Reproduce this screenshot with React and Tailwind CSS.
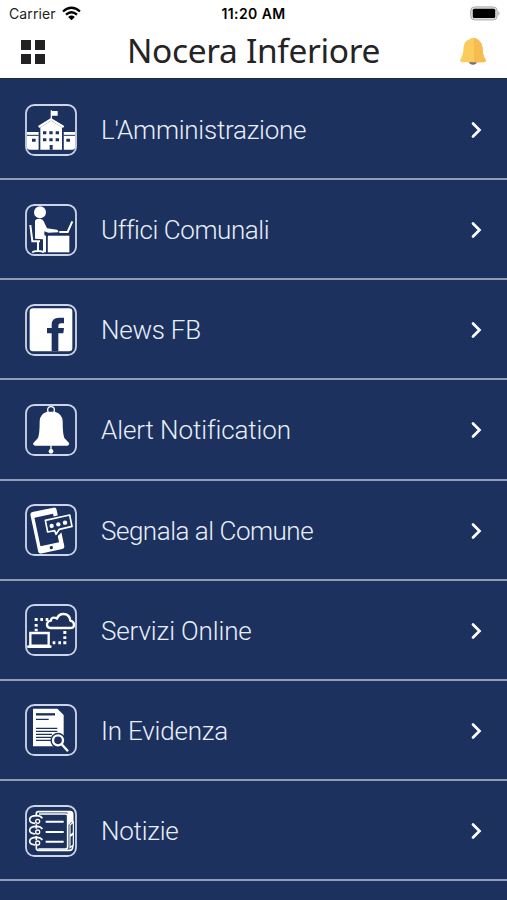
import React from 'react';

const NAVY = '#1c315e';

function TownHallIcon() {
  return (
    <>
      <path d="M36 110h35v53H44q-8 0-8-8zM146 110h34v45q0 8-8 8h-26z" fill="#fff" />
      <path d="M36 120h35M146 120h34" stroke={NAVY} strokeWidth="3" />
      <path d="M76 163V96l32-20 33 20v67z" fill="#fff" />
      <path d="M71 95l37-23 38 23" fill="none" stroke="#fff" strokeWidth="7" />
      <path d="M109 70V45M109 49h17v10h-17" fill="#fff" stroke="#fff" strokeWidth="4" />
      <path d="M84 108h10v9H84zM103 108h10v9h-10zM122 108h10v9h-10zM84 129h10v9H84zM103 129h10v9h-10zM122 129h10v9h-10zM51 130h11v9H51zM154 130h11v9h-11zM104 149h9v14h-9z" fill={NAVY} />
      <path d="M73 112v51M144 112v51" stroke={NAVY} strokeWidth="2" />
    </>
  );
}

function DeskIcon() {
  return (
    <>
      <circle cx="75" cy="51" r="18" fill="#fff" />
      <path d="M60 76q2-6 14-6 9 0 12 8l10 21 30 4q5 2 4 8l-30 1-12-4v11l9 5v47H84v-39l-24-2z" fill="#fff" />
      <path d="M46 89l6 49h23M69 139v31M53 172q0-5 16-5t16 5" fill="none" stroke="#fff" strokeWidth="6" />
      <path d="M99 121h64v50H99z" fill="#fff" />
      <path d="M97 118h67" stroke={NAVY} strokeWidth="2" />
      <path d="M133 110h25l14-32" fill="none" stroke="#fff" strokeWidth="6" />
      <path d="M95 121v52" stroke={NAVY} strokeWidth="4" />
    </>
  );
}

function FacebookIcon() {
  return (
    <>
      <rect x="44" y="39" width="128" height="129" rx="10" fill="#fff" />
      <path d="M110 168v-54H96v-16h14V88q0-21 22-21h15v17h-9q-8 0-8 8v6h17l-2 16h-15v54z" fill={NAVY} />
    </>
  );
}

function BellIcon() {
  return (
    <>
      <circle cx="108" cy="44" r="10" fill="none" stroke="#fff" strokeWidth="4" />
      <path d="M96 49h24q23 8 23 28 0 39 5 51l14 15q2 7-5 8H60q-7-1-5-8l14-15q5-12 5-51 0-20 22-28z" fill="#fff" />
      <path d="M108 150v15" stroke="#fff" strokeWidth="4" />
      <circle cx="108" cy="168" r="7" fill="#fff" />
    </>
  );
}

function PhoneMessageIcon() {
  return (
    <>
      <g transform="rotate(-12 98 105)">
        <rect x="57" y="42" width="80" height="127" rx="8" fill="#fff" />
        <path d="M67 60h57v87H67z" fill={NAVY} />
        <circle cx="98" cy="158" r="5" fill={NAVY} />
      </g>
      <path d="M84 71l84-20 11 48-38 11-18 17-3-14-25 3z" fill={NAVY} />
      <path d="M91 75l73-16 7 34-38 9-10 15-4-11-21 4z" fill={NAVY} stroke="#fff" strokeWidth="5" strokeLinejoin="round" />
      <circle cx="110" cy="92" r="6.5" fill="#fff" />
      <circle cx="130" cy="87" r="6.5" fill="#fff" />
      <circle cx="150" cy="82" r="6.5" fill="#fff" />
    </>
  );
}

function CloudIcon() {
  return (
    <>
      <path d="M106 98q-10-2-10-10 0-10 12-12 0-10 10-9 5 0 8 3 5-14 19-14 19 0 21 20 11 3 11 12 0 10-12 10z" fill="none" stroke="#fff" strokeWidth="7" strokeLinejoin="round" />
      <path d="M46 113h55v38H46z" fill="none" stroke="#fff" strokeWidth="7" />
      <path d="M40 154h66" stroke="#fff" strokeWidth="8" strokeLinecap="round" />
      <path d="M59 68h9v9h-9zM76 68h8v9h-8zM92 68h8v9h-8zM59 86h9v8h-9zM59 100h9v8h-9zM145 107h9v9h-9zM145 123h9v8h-9zM145 138h9v9h-9zM130 138h8v9h-8zM113 138h8v9h-8z" fill="#fff" />
    </>
  );
}

function DocumentIcon() {
  return (
    <>
      <path d="M54 40h73l19 19v94H54z" fill="#fff" />
      <path d="M63 57h57" stroke={NAVY} strokeWidth="7" />
      <path d="M63 72h38M63 99h64M63 108h64M63 117h48M63 126h46M63 135h46" stroke={NAVY} strokeWidth="4" />
      <circle cx="129" cy="135" r="23" fill={NAVY} />
      <path d="M138 146l22 24" stroke={NAVY} strokeWidth="15" />
      <circle cx="129" cy="135" r="15" fill={NAVY} stroke="#fff" strokeWidth="7" />
      <path d="M140 147l19 21" stroke="#fff" strokeWidth="7" />
    </>
  );
}

function NotebookIcon() {
  return (
    <>
      <path d="M64 60V51q0-5 6-5h95q8 0 8 8v98q0 10-10 10H71q-7 0-7-7v-10M64 84v13M64 119v13" fill="none" stroke="#fff" strokeWidth="5" />
      <path d="M72 53h80q6 0 6 6v93q0 6-6 6H70" fill="none" stroke="#fff" strokeWidth="5" />
      <path d="M157 47h15v28l-12 12z" fill="#fff" />
      <path d="M165 86l10-9v32l-10 9zM165 121l10-8v33l-10 8z" fill={NAVY} stroke="#fff" strokeWidth="3.5" />
      <path d="M92 76h54M92 107h54M92 136h54" stroke="#fff" strokeWidth="6" />
      {[0, 32, 65].map((y) => (
        <g key={y} transform={`translate(0 ${y})`}>
          <path d="M82 66q-5-8-17-8-21 0-21 12 0 10 17 11" fill="none" stroke="#fff" strokeWidth="5" />
          <circle cx="68" cy="75" r="6" fill={NAVY} stroke="#fff" strokeWidth="4" />
        </g>
      ))}
    </>
  );
}

const items = [
  { label: "L'Amministrazione", Icon: TownHallIcon, tracking: 'tracking-[-0.25px]' },
  { label: 'Uffici Comunali', Icon: DeskIcon, tracking: 'tracking-[-0.42px]' },
  { label: 'News FB', Icon: FacebookIcon, tracking: 'tracking-[-0.25px]' },
  { label: 'Alert Notification', Icon: BellIcon, tracking: 'tracking-[-0.1px]' },
  { label: 'Segnala al Comune', Icon: PhoneMessageIcon, tracking: 'tracking-[-0.48px]' },
  { label: 'Servizi Online', Icon: CloudIcon, tracking: 'tracking-[-0.12px]' },
  { label: 'In Evidenza', Icon: DocumentIcon, tracking: 'tracking-[-0.2px]' },
  { label: 'Notizie', Icon: NotebookIcon, tracking: 'tracking-[-0.25px]' },
];

function StatusBar() {
  return (
    <div className="grid h-7 grid-cols-3 items-center pl-[9px] pr-[6px] font-['Inter','Liberation_Sans',sans-serif] text-[14px] leading-none text-[#222]">
      <div className="flex items-center gap-[6px]">
        <span className="tracking-[0.1px]">Carrier</span>
        <svg width="19" height="15" viewBox="0 0 19 15" className="-mt-0.5" fill="none" stroke="#000" strokeWidth="2.3">
          <path d="M1 5.5Q9.5-2 18 5.5M4 8.7q5.5-4.8 11 0" />
          <path d="M6.2 10.9Q9.5 8 12.8 10.9L9.5 14.3z" fill="#000" stroke="none" />
        </svg>
      </div>
      <span className="pr-[3px] text-center text-[14px] font-semibold tracking-[0.4px] text-black">11:20 AM</span>
      <svg className="-mt-0.5 justify-self-end" width="31" height="15" viewBox="0 0 31 15">
        <rect x="0.7" y="0.9" width="26.5" height="13" rx="4" fill="#ddd" stroke="#aaa" />
        <rect x="2.8" y="2.8" width="22.4" height="9.3" rx="1.5" fill="#000" />
        <path d="M28.4 5q2.4 2.4 0 5z" fill="#aaa" />
      </svg>
    </div>
  );
}

function Header() {
  return (
    <header className="h-[79px] shrink-0 border-b border-[#222a3c] bg-white">
      <StatusBar />
      <div className="flex h-12 items-center justify-between px-[21px]">
        <div className="grid grid-cols-2 gap-1">
          <span className="size-[10px] bg-[#222124]" />
          <span className="size-[10px] bg-[#222124]" />
          <span className="size-[10px] bg-[#222124]" />
          <span className="size-[10px] bg-[#222124]" />
        </div>
        <h1 className="whitespace-nowrap pb-0.5 pl-0.5 font-['Noto_Sans',sans-serif] text-[33.5px] leading-none tracking-[-0.35px] text-[#242326]">Nocera Inferiore</h1>
        <svg width="26" height="30" viewBox="0 0 26 30">
          <path d="M8.5 24a4.7 5.3 0 0 0 9 0z" fill="#66717e" />
          <path d="M10 2q3-2.4 6 0 6 1.7 6.5 8.5.2 8 2.9 11.8 1.2 3-1.9 3H2.5q-3.2 0-2-3Q3.3 18.5 3.5 10.5 4 3.7 10 2z" fill="#fbcb5b" />
          <path d="M14 .7q6.5 1 8.5 9.8.2 8 2.9 11.8 1.2 3-1.9 3H14z" fill="#f5bd51" />
        </svg>
      </div>
    </header>
  );
}

function MenuRow({ label, Icon, tracking }) {
  return (
    <li className="flex h-[100.15px] shrink-0 items-center border-b-2 border-[#929db4] pl-[25px] pr-[24px] pt-px">
      <svg className="shrink-0" width="52" height="52" viewBox="30 26 156 156">
        <rect x="33" y="29" width="150" height="150" rx="25" fill="none" stroke="#cbd4e8" strokeWidth="5.5" />
        <Icon />
      </svg>
      <span className={`ml-6 flex-1 whitespace-nowrap pt-0.5 text-[26px] font-[350] text-[#e9effa] ${tracking}`}>{label}</span>
      <svg className="mt-px" width="13" height="18" viewBox="0 0 13 18" fill="none" stroke="#fff" strokeWidth="2.7" strokeLinecap="round">
        <path d="M3 2.5L9.5 9 3 15.500" />
      </svg>
    </li>
  );
}

export default function App() {
  return (
    <div className="flex h-screen flex-col overflow-hidden bg-[#1c315e]">
      <Header />
      <ul className="flex flex-col pt-px font-['Roboto','Liberation_Sans',sans-serif]">
        {items.map((item) => (
          <MenuRow key={item.label} {...item} />
        ))}
      </ul>
    </div>
  );
}
